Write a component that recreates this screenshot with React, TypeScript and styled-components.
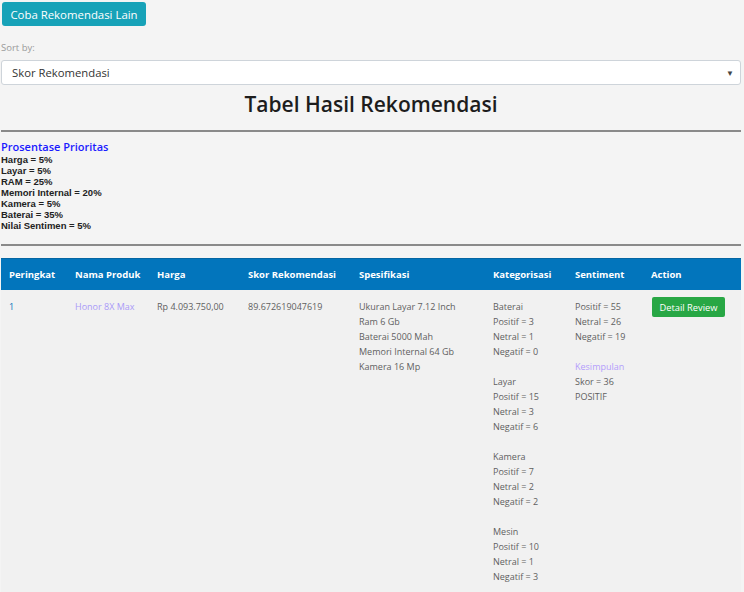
import React from "react";
import styled, { createGlobalStyle } from "styled-components";

const Global = createGlobalStyle`
  html, body { margin: 0; padding: 0; background: #f4f4f4; }
  body { font-family: "Open Sans", "Noto Sans", sans-serif; color: #212529; }
`;

const Page = styled.div`
  padding: 2px 3px 0 1px;
  display: flex;
  flex-direction: column;
`;

const TealButton = styled.button`
  align-self: flex-start;
  margin-left: 1px;
  height: 24px;
  width: 144px;
  padding: 0;
  background: #17a2b8;
  color: #fff;
  border: none;
  border-radius: 3px;
  font-family: inherit;
  font-size: 11.4px;
  font-weight: 500;
`;

const SortLabel = styled.div`
  margin-top: 15px;
  font-size: 9.5px;
  color: #9a9a9a;
  line-height: 14px;
`;

const SelectBox = styled.div`
  margin-top: 5px;
  height: 25px;
  box-sizing: border-box;
  background: #fff;
  border: 1px solid #ced4da;
  border-radius: 3px;
  display: flex;
  align-items: center;
  justify-content: space-between;
  padding: 0 6px 0 10px;
  font-size: 11.3px;
  color: #333;
`;

const Arrow = styled.span`
  font-size: 8px;
  color: #444;
`;

const Title = styled.h2`
  margin: 6px 0 0;
  text-align: center;
  font-size: 21px;
  font-weight: 600;
  line-height: 26px;
  color: #1d1d1d;
`;

const Rule = styled.hr<{ $top: number }>`
  margin: ${(p) => p.$top}px 0 0;
  border: none;
  border-top: 2px solid #8a8a8a;
`;

const Priority = styled.div`
  margin-top: 8px;
  display: flex;
  flex-direction: column;
`;

const PriorityTitle = styled.div`
  color: #1a1aff;
  font-size: 11px;
  font-weight: 600;
  line-height: 14px;
`;

const PriorityLine = styled.div`
  font-family: "Liberation Sans", Arial, sans-serif;
  font-size: 9.5px;
  font-weight: 700;
  line-height: 11px;
  color: #222;
`;

const Table = styled.table`
  margin-top: 12px;
  width: 100%;
  border-collapse: collapse;
  table-layout: fixed;
`;

const Col = styled.col<{ $w?: number }>`
  width: ${(p) => (p.$w ? `${p.$w}px` : "auto")};
`;

const Th = styled.th`
  background: #0275bc;
  color: #fff;
  text-align: left;
  font-size: 9.5px;
  font-weight: 700;
  height: 31px;
  padding: 0 8px;
  white-space: nowrap;
  border-top: 1px solid #0566a3;
`;

const Td = styled.td<{ $color?: string }>`
  background: #f1f1f1;
  vertical-align: top;
  padding: 9px 8px 8px;
  font-size: 9px;
  line-height: 15px;
  color: ${(p) => p.$color || "#5f5f5f"};
  white-space: nowrap;
`;

const Accent = styled.span`
  color: #b39dfc;
`;

const Green = styled.button`
  margin-top: -2px;
  margin-left: 1px;
  background: #28a745;
  color: #fff;
  border: none;
  border-radius: 2px;
  height: 20px;
  width: 73px;
  padding: 0;
  font-family: inherit;
  font-size: 9.3px;
  font-weight: 500;
`;

const Lines = ({ items }: { items: React.ReactNode[] }) => (
  <>
    {items.map((t, i) => (
      <div key={i}>{t === "" ? "\u00a0" : t}</div>
    ))}
  </>
);

export default function App() {
  return (
    <Page>
      <Global />
      <TealButton>Coba Rekomendasi Lain</TealButton>
      <SortLabel>Sort by:</SortLabel>
      <SelectBox>
        <span>Skor Rekomendasi</span>
        <Arrow>▼</Arrow>
      </SelectBox>
      <Title>Tabel Hasil Rekomendasi</Title>
      <Rule $top={13} />
      <Priority>
        <PriorityTitle>Prosentase Prioritas</PriorityTitle>
        <PriorityLine>Harga = 5%</PriorityLine>
        <PriorityLine>Layar = 5%</PriorityLine>
        <PriorityLine>RAM = 25%</PriorityLine>
        <PriorityLine>Memori Internal = 20%</PriorityLine>
        <PriorityLine>Kamera = 5%</PriorityLine>
        <PriorityLine>Baterai = 35%</PriorityLine>
        <PriorityLine>Nilai Sentimen = 5%</PriorityLine>
      </Priority>
      <Rule $top={13} />
      <Table>
        <colgroup>
          <Col $w={66} />
          <Col $w={82} />
          <Col $w={91} />
          <Col $w={111} />
          <Col $w={134} />
          <Col $w={82} />
          <Col $w={76} />
          <Col />
        </colgroup>
        <thead>
          <tr>
            <Th>Peringkat</Th>
            <Th>Nama Produk</Th>
            <Th>Harga</Th>
            <Th>Skor Rekomendasi</Th>
            <Th>Spesifikasi</Th>
            <Th>Kategorisasi</Th>
            <Th>Sentiment</Th>
            <Th>Action</Th>
          </tr>
        </thead>
        <tbody>
          <tr>
            <Td $color="#0275bc">1</Td>
            <Td $color="#a99af8">Honor 8X Max</Td>
            <Td>Rp 4.093.750,00</Td>
            <Td>89.672619047619</Td>
            <Td>
              <Lines
                items={[
                  "Ukuran Layar 7.12 Inch",
                  "Ram 6 Gb",
                  "Baterai 5000 Mah",
                  "Memori Internal 64 Gb",
                  "Kamera 16 Mp",
                ]}
              />
            </Td>
            <Td>
              <Lines
                items={[
                  "Baterai",
                  "Positif = 3",
                  "Netral = 1",
                  "Negatif = 0",
                  "",
                  "Layar",
                  "Positif = 15",
                  "Netral = 3",
                  "Negatif = 6",
                  "",
                  "Kamera",
                  "Positif = 7",
                  "Netral = 2",
                  "Negatif = 2",
                  "",
                  "Mesin",
                  "Positif = 10",
                  "Netral = 1",
                  "Negatif = 3",
                ]}
              />
            </Td>
            <Td>
              <Lines
                items={[
                  "Positif = 55",
                  "Netral = 26",
                  "Negatif = 19",
                  "",
                  <Accent>Kesimpulan</Accent>,
                  "Skor = 36",
                  "POSITIF",
                ]}
              />
            </Td>
            <Td>
              <Green>Detail Review</Green>
            </Td>
          </tr>
        </tbody>
      </Table>
    </Page>
  );
}
